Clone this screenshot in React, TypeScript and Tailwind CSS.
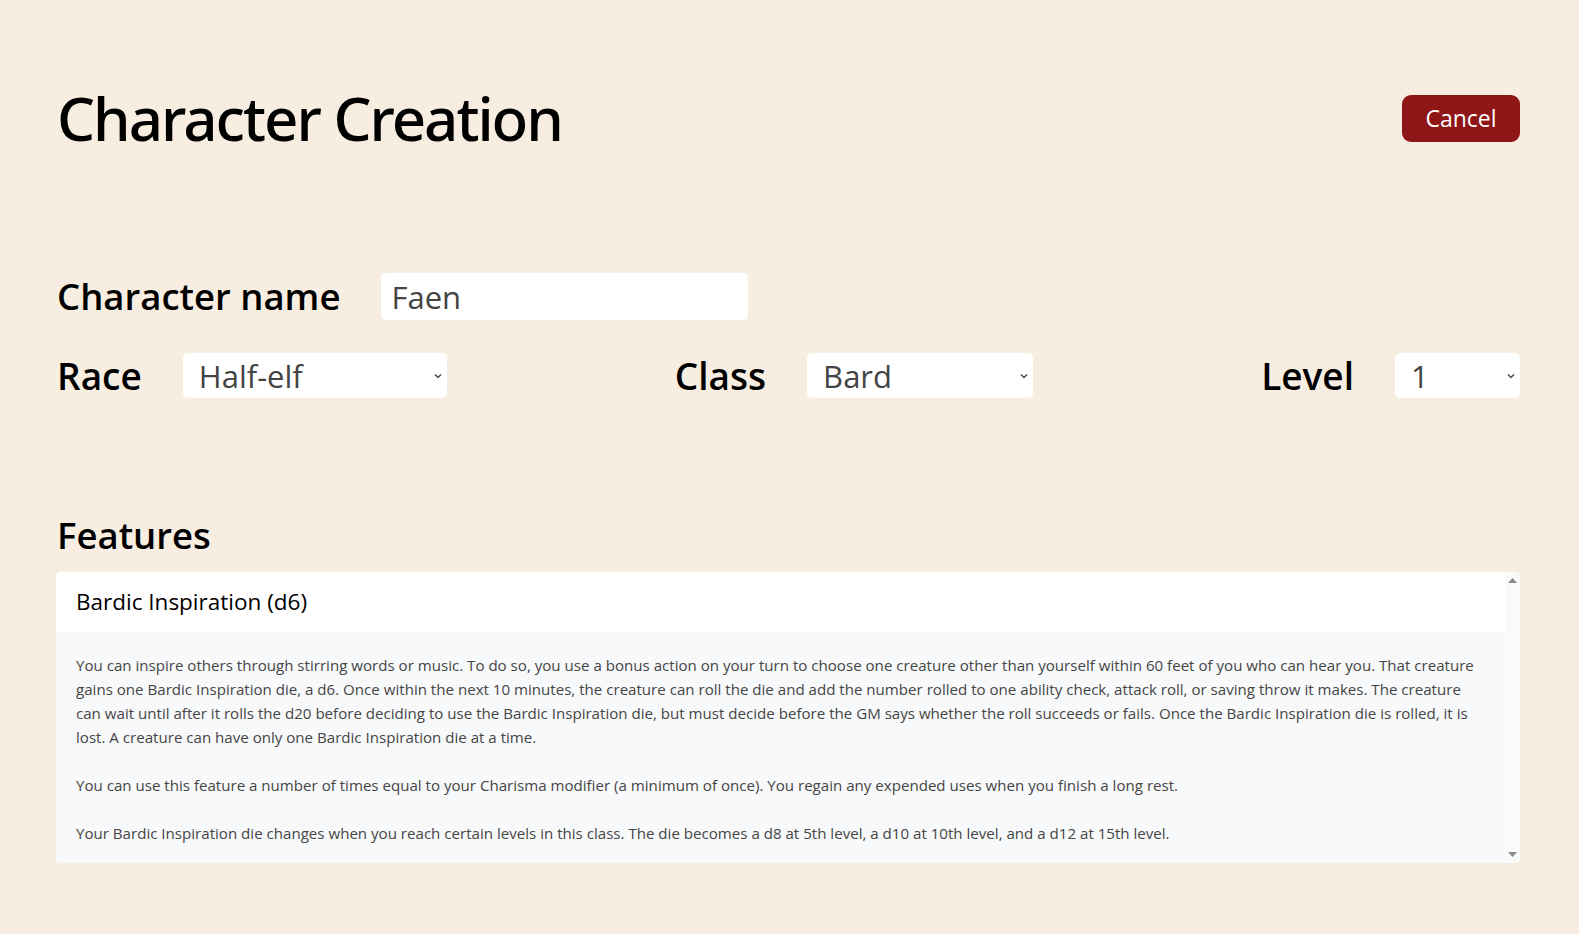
import React from 'react';

const font = { fontFamily: '"Open Sans", "Noto Sans", sans-serif' };
const titleFont = { fontFamily: '"Noto Sans", "Open Sans", sans-serif' };

function Chevron() {
  return (
    <svg width="8" height="5" viewBox="0 0 8 5" className="pointer-events-none absolute right-[5px] top-1/2 -translate-y-1/2">
      <path d="M1 1l3 3 3-3" fill="none" stroke="#4a4a4a" strokeWidth="1.5" />
    </svg>
  );
}

interface PickerProps {
  label: string;
  value: string;
  options: string[];
  width: string;
}

function Picker({ label, value, options, width }: PickerProps) {
  return (
    <div className="flex items-center gap-[41px]">
      <label className="text-[37px] font-semibold leading-[45px] text-black">{label}</label>
      <div className={`relative ${width}`}>
        <select
          defaultValue={value}
          className="h-[45px] w-full appearance-none rounded-[5px] bg-white pl-[16px] pr-6 text-[31px] text-[#444] outline-none"
        >
          {options.map((o) => (
            <option key={o}>{o}</option>
          ))}
        </select>
        <Chevron />
      </div>
    </div>
  );
}

export default function App() {
  return (
    <div className="min-h-[934px] bg-[#f7ede0] px-[57px] pt-[80px] text-black" style={font}>
      {/* Header */}
      <div className="flex h-[77px] items-center justify-between">
        <h1 className="text-[60px] font-medium leading-[77px] tracking-[-2px]" style={titleFont}>
          Character Creation
        </h1>
        <button className="mr-[2px] h-[47px] w-[118px] rounded-[9px] bg-[#8e1616] text-[23px] text-white">
          Cancel
        </button>
      </div>

      {/* Name */}
      <div className="mt-[116px] flex items-center gap-[41px]">
        <label className="text-[36.5px] font-semibold leading-[47px]">Character name</label>
        <input
          defaultValue="Faen"
          className="h-[47px] w-[367px] rounded-[5px] bg-white px-[10px] text-[31px] text-[#444] outline-none"
        />
      </div>

      {/* Race / Class / Level */}
      <div className="mt-[33px] flex items-center justify-between pr-[2px]">
        <Picker label="Race" value="Half-elf" options={['Human', 'Elf', 'Half-elf', 'Dwarf', 'Halfling']} width="w-[264px]" />
        <Picker label="Class" value="Bard" options={['Bard', 'Cleric', 'Fighter', 'Rogue', 'Wizard']} width="w-[226px]" />
        <Picker label="Level" value="1" options={['1', '2', '3', '4', '5']} width="w-[125px]" />
      </div>

      {/* Features */}
      <h2 className="mt-[113px] text-[36.5px] font-semibold leading-[48px]">Features</h2>
      <div className="-ml-px mr-[2px] mt-[13px] flex h-[291px] overflow-hidden rounded-[5px] bg-white">
        <div className="flex-1 overflow-hidden">
          <div className="flex h-[60px] items-center bg-white px-[20px] text-[22.5px]">Bardic Inspiration (d6)</div>
          <div className="bg-[#f8f9fa] pb-[20px] pl-[20px] pr-[23px] pt-[21px] text-[15.1px] leading-[24px] text-[#454545]">
            <p>
              You can inspire others through stirring words or music. To do so, you use a bonus action on your turn to
              choose one creature other than yourself within 60 feet of you who can hear you. That creature gains one
              Bardic Inspiration die, a d6. Once within the next 10 minutes, the creature can roll the die and add the
              number rolled to one ability check, attack roll, or saving throw it makes. The creature can wait until after
              it rolls the d20 before deciding to use the Bardic Inspiration die, but must decide before the GM says
              whether the roll succeeds or fails. Once the Bardic Inspiration die is rolled, it is lost. A creature can
              have only one Bardic Inspiration die at a time.
            </p>
            <p className="mt-[24px]">
              You can use this feature a number of times equal to your Charisma modifier (a minimum of once). You regain
              any expended uses when you finish a long rest.
            </p>
            <p className="mt-[24px]">
              Your Bardic Inspiration die changes when you reach certain levels in this class. The die becomes a d8 at 5th
              level, a d10 at 10th level, and a d12 at 15th level.
            </p>
          </div>
        </div>
        {/* scrollbar */}
        <div className="flex w-[15px] flex-col items-center justify-between bg-[#fafafa] py-[6px]">
          <svg width="9" height="5" viewBox="0 0 9 5">
            <path d="M4.5 0L9 5H0z" fill="#8a8a8a" />
          </svg>
          <svg width="9" height="5" viewBox="0 0 9 5">
            <path d="M0 0h9L4.5 5z" fill="#8a8a8a" />
          </svg>
        </div>
      </div>
    </div>
  );
}
